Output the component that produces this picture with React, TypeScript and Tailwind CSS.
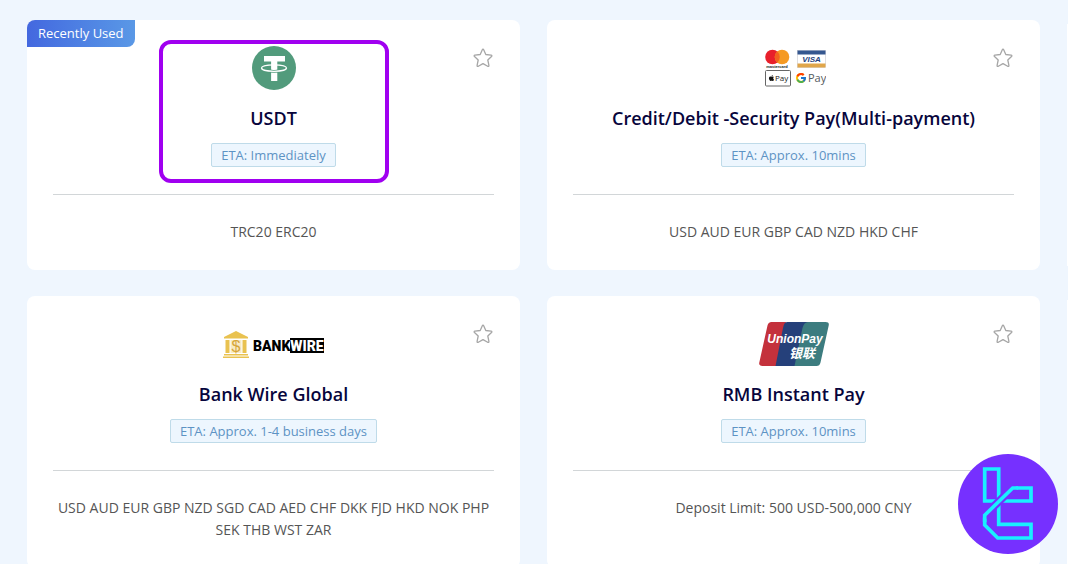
import React from 'react';
import { FaApple } from 'react-icons/fa';
import { FcGoogle } from 'react-icons/fc';

const UsdtLogo: React.FC = () => (
  <svg width="44" height="44" viewBox="0 0 44 44" role="img" aria-label="Tether">
    <circle cx="22" cy="22" r="22" fill="#529b7c" />
    <ellipse cx="22" cy="22" rx="12.5" ry="3.2" fill="none" stroke="#fff" strokeWidth="1.2" />
    <path d="M12 10h21v5.6h-7.700v8.200c-2 .3-4.300.3-6.200 0v-8.200H12z" fill="#fff" />
    <path d="M19.100 25.200h6.200V35h-6.200z" fill="#fff" />
    <path d="M9.500 22c0 4.500 25 4.500 25 0" fill="none" stroke="#529b7c" strokeWidth="2.600" />
    <path d="M9.500 22c0 4.500 25 4.500 25 0" fill="none" stroke="#fff" strokeWidth="1.400" />
  </svg>
);

const CardsLogo: React.FC = () => (
  <svg width="64" height="44" viewBox="0 0 64 44" role="img" aria-label="Mastercard, Visa, Apple Pay, Google Pay">
    <circle cx="10.500" cy="11" r="7.300" fill="#e8202b" />
    <circle cx="20" cy="11" r="7.300" fill="#f59a23" />
    <path d="M15.250 5.450a7.300 7.300 0 0 1 0 11.100a7.300 7.300 0 0 1 0-11.100z" fill="#f2611f" />
    <text x="15" y="22" textAnchor="middle" fontFamily="Liberation Sans" fontWeight="700" fontSize="4" fill="#222">mastercard</text>

    <rect x="35.500" y="4.500" width="28" height="17" fill="#fff" stroke="#c9c9cf" strokeWidth="0.6" />
    <rect x="35.500" y="4.500" width="28" height="4" fill="#35578f" />
    <rect x="35.500" y="17.500" width="28" height="4" fill="#e0a64a" />
    <text x="49.500" y="16" textAnchor="middle" fontFamily="Liberation Sans" fontWeight="700" fontStyle="italic" fontSize="8" fill="#24427c">VISA</text>

    <rect x="3.500" y="24.500" width="25" height="15.500" rx="1" fill="#fff" stroke="#666" strokeWidth="1" />
    <FaApple x="6" y="28.500" size={7} color="#111" />
    <text x="13" y="35" fontFamily="Open Sans" fontSize="8" fill="#222">Pay</text>

    <FcGoogle x="33" y="26" size={12} />
    <text x="46" y="36" fontFamily="Open Sans" fontSize="11" fill="#555a60">Pay</text>
  </svg>
);

const BankWireLogo: React.FC = () => (
  <svg width="103" height="44" viewBox="0 0 103 44" role="img" aria-label="Bankwire">
    <g fill="#e9c250">
      <path d="M14 9l12 6v1.500H2V15z" />
      <path d="M3.500 18h4v13h-4zM20.500 18h4v13h-4z" />
      <path d="M2 32h24v1.500H2zM1 34.500h26V36H1z" />
      <path d="M8.500 18h11v13h-11z" fill="#f8ebc4" />
    </g>
    <text x="14" y="30" textAnchor="middle" fontFamily="Liberation Sans" fontSize="16" fill="#d6a63a">$</text>
    <rect x="68" y="16" width="34" height="15" fill="#000" />
    <text x="31" y="29" fontFamily="Roboto" fontWeight="900" fontSize="14" fill="#000">BANK</text>
    <text x="85" y="29" textAnchor="middle" fontFamily="Roboto" fontWeight="900" fontSize="14" fill="#fff">WIRE</text>
  </svg>
);

const UnionPayLogo: React.FC = () => (
  <svg width="70" height="44" viewBox="0 0 70 44" role="img" aria-label="UnionPay">
    <path d="M12.500 0H27l-9 44H3.500Q-.5 44 .3 40.500L8.500 3.500Q9.300 0 12.500 0z" fill="#c4313c" />
    <path d="M28 0h22l-9 44H16.500l7.500-38q1-6 4-6z" fill="#25407a" />
    <path d="M49 0h17.500Q70.500 0 69.700 3.500L61.500 40.500Q60.700 44 57.500 44H35.500l8-38q1.500-6 5.500-6z" fill="#3c7c7f" />
    <text x="36" y="21" textAnchor="middle" fontFamily="Liberation Sans" fontWeight="700" fontStyle="italic" fontSize="12" fill="#fff">UnionPay</text>
    <text x="43" y="36" textAnchor="middle" fontFamily="Noto Sans CJK SC" fontWeight="700" fontStyle="italic" fontSize="13" fill="#fff">银联</text>
  </svg>
);

const BrandMark: React.FC = () => (
  <svg width="100" height="100" viewBox="0 0 100 100" aria-hidden="true">
    <circle cx="50" cy="50" r="50" fill="#7630ff" />
    <g fill="none" stroke="#19f0ff" strokeWidth="3.700">
      <path d="M40.700 47V15h-14v32H40" />
      <path d="M40.700 48v22.300H73V84H39.700l-13-13v-9.700" />
      <path d="M42 47h31V34H54.700" />
      <path d="M57 31.700L24.500 63.500" stroke="#7630ff" strokeWidth="8" />
      <path d="M60 34h-5.300L26.700 61.300V68" />
    </g>
  </svg>
);

const methods = [
  {
    name: "USDT",
    eta: "Immediately",
    details: "TRC20 ERC20",
    logo: <UsdtLogo />,
    recent: true
  },
  {
    name: "Credit/Debit -Security Pay(Multi-payment)",
    eta: "Approx. 10mins",
    details: "USD AUD EUR GBP CAD NZD HKD CHF",
    logo: <CardsLogo />
  },
  {
    name: "Bank Wire Global",
    eta: "Approx. 1-4 business days",
    details: "USD AUD EUR GBP NZD SGD CAD AED CHF DKK FJD HKD NOK PHP SEK THB WST ZAR",
    logo: <BankWireLogo />
  },
  {
    name: "RMB Instant Pay",
    eta: "Approx. 10mins",
    details: "Deposit Limit: 500 USD-500,000 CNY",
    logo: <UnionPayLogo />
  }
];

type Method = (typeof methods)[number];

const MethodCard: React.FC<{ method: Method }> = ({ method }) => (
  <article className="relative rounded-lg bg-white px-[26px] pt-[26px] pb-[27px] text-center">
    {method.recent && (
      <span className="absolute top-0 left-0 rounded-tl-lg rounded-br-lg bg-linear-to-r from-[#4468df] to-[#5a98e6] px-[11px] text-[13px] leading-[27px] text-white">
        Recently Used
      </span>
    )}
    <button type="button" aria-label={`Add ${method.name} to favourites`} className="absolute top-7 right-[27px]">
      <svg width="20" height="20" viewBox="0 0 20 20" fill="none" stroke="#a6a6a6" strokeWidth="1.300" strokeLinejoin="round">
        <path d="M10 1.200Q10.500 1.200 10.800 1.900L12.800 6.500L18 7.100Q19.500 7.400 18.500 8.500L14.800 12L15.900 17.400Q16 18.900 14.700 18.300L10 15.600L5.300 18.300Q4 18.900 4.100 17.400L5.200 12L1.500 8.500Q.5 7.400 2 7.100L7.200 6.500L9.200 1.900Q9.500 1.200 10 1.200z" />
      </svg>
    </button>

    <div className="relative flex flex-col items-center">
      {method.recent && (
        <div className="pointer-events-none absolute -top-1.5 -bottom-4 left-1/2 w-[230px] -translate-x-1/2 rounded-xl border-4 border-[#a000f0]" />
      )}
      {method.logo}
      <h2 className="mt-4 text-lg leading-6 font-semibold text-[#07053c]">{method.name}</h2>
      <p className="mt-[13px] rounded-xs border border-[#bfdbe9] bg-[#edf6fe] px-[9px] text-[13px] leading-[22px] text-[#5d93c4]">
        ETA: {method.eta}
      </p>
    </div>

    <hr className="mt-[27px] border-[#d2d6d8]" />
    <p className="mt-[26px] text-sm leading-[22px] text-[#555]">{method.details}</p>
  </article>
);

const App: React.FC = () => {
  return (
    <main className="h-screen overflow-hidden bg-[#eff6fe] pt-5 pl-[27px] font-['Open_Sans',sans-serif]">
      <div className="grid grid-cols-[1fr_1fr_1px] gap-x-[27px] gap-y-[26px]">
        {methods.map((method, index) => (
          <React.Fragment key={method.name}>
            <MethodCard method={method} />
            {/* edge of the next column */}
            {index % 2 === 1 && <div className="my-1 bg-white" />}
          </React.Fragment>
        ))}
      </div>
      <div className="fixed right-2.5 bottom-2.5">
        <BrandMark />
      </div>
    </main>
  );
};

export default App;
